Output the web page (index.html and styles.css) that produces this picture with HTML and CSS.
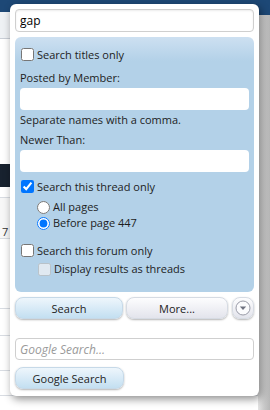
FILE: index.html
```html
<!DOCTYPE html>
<html lang="en">
  <head>
    <meta charset="UTF-8" />
    <meta name="viewport" content="width=device-width, initial-scale=1.0" />
    <title>Search Thread</title>
    <link rel="stylesheet" href="styles.css">
  </head>

  <body>
    <div class="page">
      <div class="page-main">
        <div class="topbar"></div>
        <div class="navbar"></div>
        <div class="row row-tall"></div>
        <div class="row row-dark"></div>
        <div class="row row-a"></div>
        <div class="row row-b"><span class="post-num">7</span></div>
        <div class="row row-c"></div>
        <div class="row row-d"></div>
        <div class="row row-e"></div>
        <div class="row row-f"></div>
      </div>
      <div class="page-side"></div>
    </div>

    <!-- search popup -->
    <form class="popup" onsubmit="return false">
      <input class="text-input keywords" type="text" value="gap" />

      <div class="controls">
        <label class="check first">
          <input type="checkbox" />
          <span>Search titles only</span>
        </label>

        <div class="field-label">Posted by Member:</div>
        <input class="text-input inner" type="text" />
        <div class="hint">Separate names with a comma.</div>

        <div class="field-label newer">Newer Than:</div>
        <input class="text-input inner" type="text" />

        <label class="check thread">
          <input type="checkbox" checked />
          <span>Search this thread only</span>
        </label>
        <ul class="radios">
          <li>
            <label><input type="radio" name="pages" /> All pages</label>
          </li>
          <li>
            <label><input type="radio" name="pages" checked /> Before page 447</label>
          </li>
        </ul>

        <label class="check forum">
          <input type="checkbox" />
          <span>Search this forum only</span>
        </label>
        <label class="check sub">
          <input type="checkbox" disabled />
          <span>Display results as threads</span>
        </label>
      </div>

      <div class="buttons">
        <button class="btn btn-primary" type="submit">Search</button>
        <button class="btn btn-more" type="button">More...</button>
        <button class="btn btn-menu" type="button">
          <svg width="16" height="16" viewBox="0 0 16 16">
            <circle cx="8" cy="8" r="7" fill="#fbfbfd" stroke="#9a9ca8" stroke-width="1" />
            <path d="M4.8 6.5 L11.2 6.5 L8 10 Z" fill="#6f7280" />
          </svg>
        </button>
      </div>

      <input class="text-input google" type="text" placeholder="Google Search..." />
      <button class="btn btn-primary btn-google" type="button">Google Search</button>
    </form>
  </body>
</html>
```

FILE: styles.css
```css
body {
  margin: 0;
  padding: 0;
  width: 270px;
  height: 410px;
  overflow: hidden;
  position: relative;
  background-color: #fff;
  font-family: "Open Sans", Arial, sans-serif;
  color: #000;
}

/* page behind the popup */
.page {
  display: flex;
  height: 410px;
}

.page-main {
  flex: 1;
  background-color: #fff;
}

.page-side {
  width: 12px;
  background: linear-gradient(to right, #e4e4e4, #c9c9c9 50%, #b7b7b7);
  border-top: 15px solid #1d4876;
}

.topbar {
  height: 12px;
  background-color: #1d4876;
}

.navbar {
  height: 26px;
  background-color: #eef1f4;
  border-bottom: 1px solid #c9ced6;
}

.row {
  border-bottom: 1px solid #d8dce2;
  position: relative;
}

.row-tall {
  height: 125px;
  border-bottom: none;
}

.row-dark {
  height: 23px;
  background-color: #18222f;
  border-bottom: none;
}

.row-a {
  height: 10px;
}

.row-b {
  height: 40px;
  background-color: #f7f7f7;
}

.post-num {
  position: absolute;
  left: 2px;
  top: 26px;
  font-size: 11px;
  color: #333;
}

.row-c {
  height: 69px;
}

.row-d {
  height: 26px;
}

.row-e {
  height: 34px;
}

.row-f {
  height: 24px;
}

/* popup */
.popup {
  position: absolute;
  left: 10px;
  top: 4px;
  width: 239px;
  padding: 5px 5px 7px 5px;
  background-color: #fff;
  border-radius: 6px;
  box-shadow: 2px 3px 8px rgba(0, 0, 0, 0.45);
  display: flex;
  flex-direction: column;
}

.text-input {
  box-sizing: border-box;
  height: 23px;
  margin: 0;
  padding: 0 4px;
  border: 1px solid #cfcfcf;
  border-radius: 4px;
  background-color: #fff;
  font-family: "Open Sans", Arial, sans-serif;
  font-size: 12px;
  color: #000;
  outline: none;
}

.keywords {
  font-size: 12px;
  box-shadow: inset 0 1px 2px rgba(0, 0, 0, 0.08);
}

.controls {
  margin-top: 5px;
  padding: 8px 5px 16px 5px;
  border-radius: 6px;
  background: linear-gradient(to bottom, #cde0f1 0, #b3d1e8 24px, #b3d1e8 100%);
  display: flex;
  flex-direction: column;
  font-size: 11px;
  color: #1d1d1d;
}

.check {
  display: flex;
  align-items: center;
  height: 18px;
}

.check input {
  width: 13px;
  height: 13px;
  margin: 0 3px 0 1px;
}

.field-label {
  height: 14px;
  line-height: 14px;
  margin-top: 8px;
}

.field-label.newer {
  margin-top: 6px;
}

.text-input.inner {
  height: 22px;
  margin-top: 3px;
  border: none;
  border-radius: 4px;
}

.hint {
  height: 14px;
  line-height: 14px;
  margin-top: 3px;
}

.check.thread {
  margin-top: 5px;
}

.radios {
  list-style: none;
  margin: 4px 0 0 0;
  padding: 0 0 0 17px;
}

.radios li {
  height: 16px;
}

.radios label {
  display: flex;
  align-items: center;
  height: 16px;
  line-height: 16px;
}

.radios input {
  width: 13px;
  height: 13px;
  margin: 0 3px 0 0;
}

.check.forum {
  margin-top: 10px;
}

.check.sub {
  margin-top: 3px;
  height: 14px;
  line-height: 14px;
  padding-left: 17px;
}

.check.sub span {
  color: #1d1d1d;
}

/* buttons */
.buttons {
  display: flex;
  margin-top: 5px;
  height: 22px;
}

.btn {
  box-sizing: border-box;
  height: 22px;
  padding: 0;
  border: 1px solid #d6dbe3;
  border-radius: 8px;
  font-family: "Open Sans", Arial, sans-serif;
  font-size: 11px;
  color: #222;
  cursor: pointer;
  box-shadow: 0 1px 2px rgba(0, 0, 0, 0.3);
}

.btn-primary {
  width: 108px;
  background: linear-gradient(to bottom, #eef6fc, #c3dff1);
  border-color: #c6d9e8;
}

.btn-more {
  width: 102px;
  margin-left: 3px;
  background: linear-gradient(to bottom, #fdfdfe, #e3e4ec);
}

.btn-menu {
  width: 22px;
  margin-left: 4px;
  background: linear-gradient(to bottom, #fdfdfe, #e3e4ec);
  display: flex;
  align-items: center;
  justify-content: center;
}

.google {
  margin-top: 19px;
  height: 22px;
  font-style: italic;
}

.google::placeholder {
  color: #9a9a9a;
}

.btn-google {
  margin-top: 7px;
  width: 109px;
}
```
